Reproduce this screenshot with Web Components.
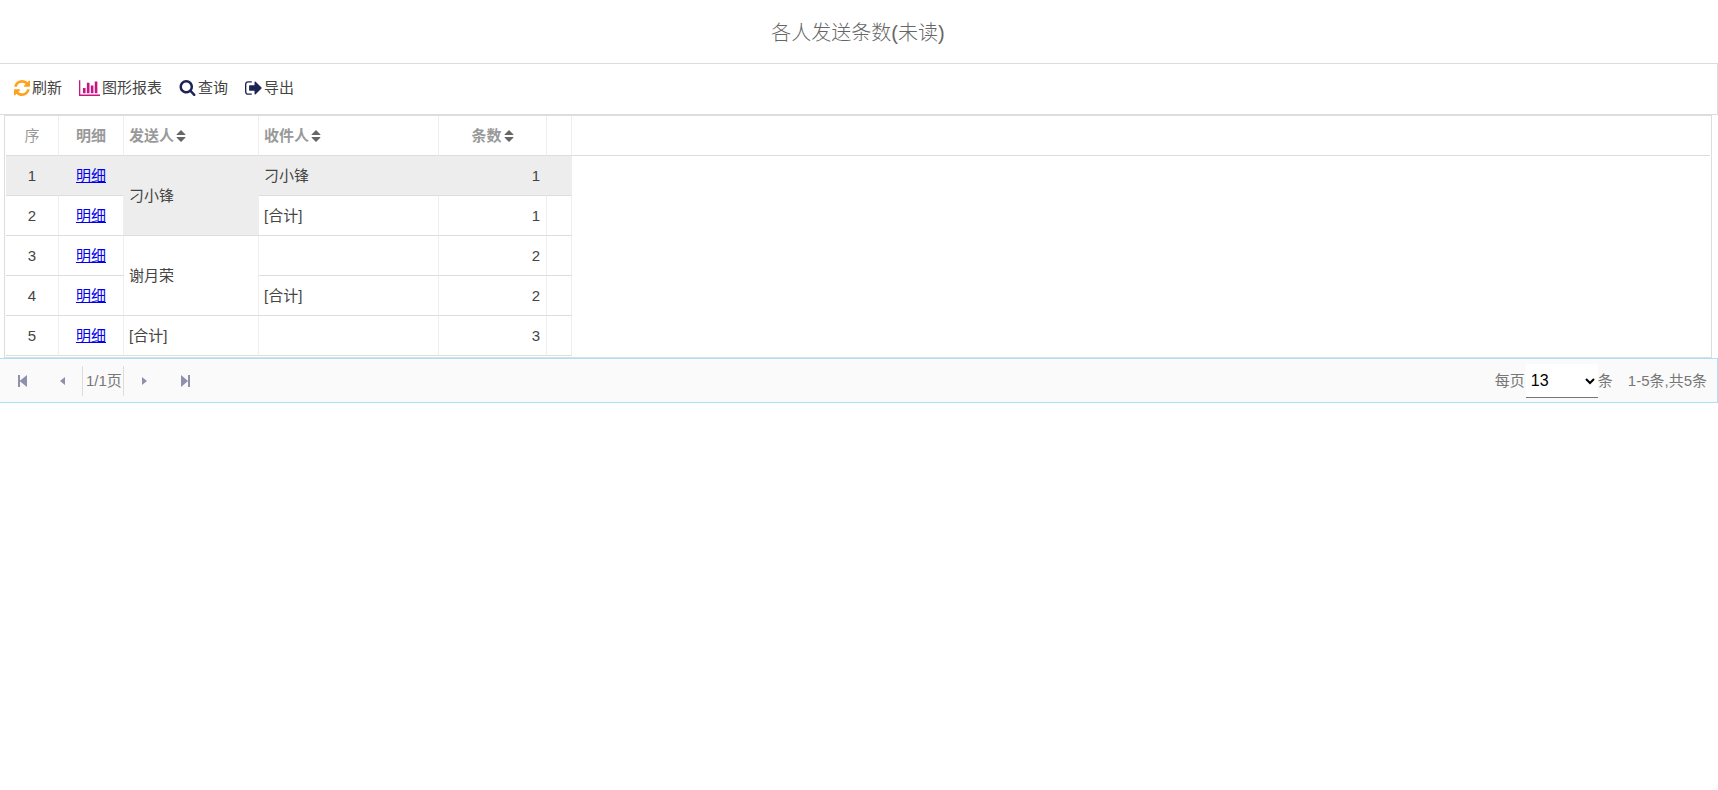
<!DOCTYPE html>
<html lang="zh-CN">
<head>
<meta charset="utf-8">
<meta name="viewport" content="width=device-width, initial-scale=1">
<title>各人发送条数(未读)</title>
<style>
    body {
        margin: 0;
        background: #fff;
        color: #444;
        font: 15px/20px "Liberation Sans", "Noto Sans CJK SC", sans-serif;
        --line: #ddd;
        --line-light: #eee;
        --accent: #ade0f5;
    }
</style>
</head>
<body>
    <report-title>各人发送条数(未读)</report-title>
    <tool-bar>
        <tool-button icon="refresh" color="#ffa11a">刷新</tool-button>
        <tool-button icon="chart" color="#c71585">图形报表</tool-button>
        <tool-button icon="search" color="#1b2452">查询</tool-button>
        <tool-button icon="export" color="#1b2452">导出</tool-button>
    </tool-bar>
    <data-grid></data-grid>
    <page-bar page="1" pages="1" size="13" total="5"></page-bar>

<script>
const ICONS = {
    refresh: {
        box: '0 0 1536 1536', width: 16,
        path: 'M1511 928q0 5-1 7-64 268-268 434.500T764 1536q-146 0-282.500-55T238 1324l-129 129q-19 19-45 19t-45-19-19-45V960q0-26 19-45t45-19h448q26 0 45 19t19 45-19 45l-137 137q71 66 161 102t187 36q134 0 250-65t186-179q11-17 53-117 8-23 30-23h192q13 0 22.500 9.500t9.500 22.500zm25-800v448q0 26-19 45t-45 19h-448q-26 0-45-19t-19-45 19-45l138-138q-148-137-349-137-134 0-250 65T332 500q-11 17-53 117-8 23-30 23H50q-13 0-22.500-9.500T18 608v-7q65-268 270-434.500T768 0q146 0 284 55.500T1297 212l130-129q19-19 45-19t45 19 19 45z'
    },
    chart: {
        box: '0 0 2048 1536', width: 21,
        path: 'M640 768v512H384V768h256zm384-512v1024H768V256h256zm1024 1152v128H0V0h128v1408h1920zm-640-896v768h-256V512h256zm384-384v1152h-256V128h256z'
    },
    search: {
        box: '0 0 1664 1664', width: 17,
        path: 'M1152 704q0-185-131.500-316.500T704 256 387.500 387.500 256 704t131.500 316.500T704 1152t316.500-131.500T1152 704zm512 832q0 52-38 90t-90 38q-54 0-90-38l-343-342q-179 124-399 124-143 0-273.500-55.500t-225-150-150-225T0 704t55.500-273.500 150-225 225-150T704 0t273.500 55.500 225 150 150 225T1408 704q0 220-124 399l343 343q37 37 37 90z'
    },
    export: {
        box: '0 0 1600 1280', width: 17,
        path: 'M640 1184q0 4 1 20t.5 26.500-3 23.500-10 19.500-20.500 6.500H288q-119 0-203.500-84.500T0 992V288Q0 169 84.500 84.500T288 0h320q13 0 22.500 9.500T640 32q0 4 1 20t.5 26.500-3 23.500-10 19.500T608 128H288q-66 0-113 47t-47 113v704q0 66 47 113t113 47h312l11.500 1 11.500 3 8 5.500 7 9 2 13.500zm928-544q0 26-19 45l-544 544q-19 19-45 19t-45-19-19-45V896H448q-26 0-45-19t-19-45V448q0-26 19-45t45-19h448V96q0-26 19-45t45-19 45 19l544 544q19 19 19 45z'
    }
};

class ReportTitle extends HTMLElement {
    connectedCallback() {
        this.attachShadow({ mode: 'open' });
        this.shadowRoot.innerHTML = `
            <style>
                :host { display: block; }
                h1 {
                    margin: 0;
                    padding: 18px 2px 15px 0;
                    color: #666;
                    font-size: 20px;
                    font-weight: 300;
                    line-height: 30px;
                    text-align: center;
                }
            </style>
            <h1><slot></slot></h1>
        `;
    }
}

class ToolBar extends HTMLElement {
    connectedCallback() {
        this.attachShadow({ mode: 'open' });
        this.shadowRoot.innerHTML = `
            <style>
                :host { display: block; }
                div {
                    display: flex;
                    align-items: center;
                    gap: 17px;
                    padding: 9px 14px 11px;
                    border: 1px solid var(--line);
                    border-left: 0;
                }
            </style>
            <div role="toolbar"><slot></slot></div>
        `;
    }
}

class ToolButton extends HTMLElement {
    connectedCallback() {
        const icon = ICONS[this.getAttribute('icon')];
        this.attachShadow({ mode: 'open' });
        this.shadowRoot.innerHTML = `
            <style>
                :host { display: block; }
                button {
                    display: flex;
                    align-items: center;
                    gap: 2px;
                    height: 30px;
                    padding: 0;
                    border: 0;
                    background: none;
                    color: inherit;
                    font: inherit;
                    cursor: pointer;
                }
                svg { height: 16px; }
            </style>
            <button type="button">
                <svg viewBox="${icon.box}" width="${icon.width}" fill="${this.getAttribute('color')}" aria-hidden="true"><path d="${icon.path}"/></svg>
                <span><slot></slot></span>
            </button>
        `;
    }
}

class SortHeader extends HTMLElement {
    connectedCallback() {
        this.attachShadow({ mode: 'open' });
        this.shadowRoot.innerHTML = `
            <style>
                :host { display: inline-block; vertical-align: top; }
                button {
                    display: flex;
                    align-items: center;
                    gap: 2px;
                    padding: 0;
                    border: 0;
                    background: none;
                    color: inherit;
                    font: inherit;
                    cursor: pointer;
                }
            </style>
            <button type="button">
                <slot></slot>
                <svg width="10" height="14" viewBox="0 0 10 14" fill="#666" aria-hidden="true"><path d="M5 1 9.500 5.500Q9.500 6 9 6H1Q.5 6 .5 5.500zM1 8h8q.5 0 .5.500L5 13 .5 8.500Q.5 8 1 8z"/></svg>
            </button>
        `;
    }
}

class DataGrid extends HTMLElement {
    // span = rows the sender cell covers, 0 = covered by the row above
    rows = [
        { sender: '刁小锋', span: 2, receiver: '刁小锋', count: 1, active: true },
        { span: 0, receiver: '[合计]', count: 1 },
        { sender: '谢月荣', span: 2, receiver: '', count: 2 },
        { span: 0, receiver: '[合计]', count: 2 },
        { sender: '[合计]', span: 1, receiver: '', count: 3 }
    ];

    connectedCallback() {
        this.attachShadow({ mode: 'open' });
        this.shadowRoot.innerHTML = `
            <style>
                :host {
                    display: block;
                    margin: 0 6px 0 4px;
                    padding: 0 1px 1px;
                    border: 1px solid var(--line);
                }
                table {
                    width: 100%;
                    table-layout: fixed;
                    border-spacing: 0;
                }
                th, td {
                    box-sizing: border-box;
                    height: 40px;
                    padding: 0 5px;
                    border-right: 1px solid var(--line-light);
                    border-bottom: 1px solid var(--line);
                    text-align: left;
                }
                th { color: #999; }
                th.plain { font-weight: normal; }
                th.rest { border-right: 0; }
                .mid { text-align: center; }
                td.num { padding-right: 6px; text-align: right; }
                tr.active td { background: #ededed; }
                a { color: #00e; }
            </style>
            <table>
                <colgroup>
                    <col style="width: 53px">
                    <col style="width: 65px">
                    <col style="width: 135px">
                    <col style="width: 180px">
                    <col style="width: 108px">
                    <col style="width: 25px">
                    <col>
                </colgroup>
                <thead>
                    <tr>
                        <th class="mid plain">序</th>
                        <th class="mid">明细</th>
                        <th><sort-header>发送人</sort-header></th>
                        <th><sort-header>收件人</sort-header></th>
                        <th class="mid"><sort-header>条数</sort-header></th>
                        <th></th>
                        <th class="rest"></th>
                    </tr>
                </thead>
                <tbody>${this.rows.map((row, i) => this.renderRow(row, i)).join('')}</tbody>
            </table>
        `;
    }

    renderRow(row, i) {
        const sender = row.span ? `<td rowspan="${row.span}">${row.sender}</td>` : '';
        return `
            <tr class="${row.active ? 'active' : ''}">
                <td class="mid">${i + 1}</td>
                <td class="mid"><a href="#detail-${i + 1}">明细</a></td>
                ${sender}
                <td>${row.receiver}</td>
                <td class="num">${row.count}</td>
                <td></td>
            </tr>
        `;
    }
}

class PageBar extends HTMLElement {
    connectedCallback() {
        const page = this.getAttribute('page');
        const pages = this.getAttribute('pages');
        const size = this.getAttribute('size');
        const total = this.getAttribute('total');
        this.attachShadow({ mode: 'open' });
        this.shadowRoot.innerHTML = `
            <style>
                :host {
                    display: flex;
                    align-items: center;
                    justify-content: space-between;
                    padding: 5px 10px 4px 2px;
                    border: 1px solid var(--accent);
                    border-left: 0;
                    background: #fafafa;
                    color: #777;
                }
                nav, .size { display: flex; align-items: center; }
                button {
                    display: flex;
                    align-items: center;
                    justify-content: center;
                    width: 40px;
                    height: 30px;
                    padding: 0;
                    border: 0;
                    background: none;
                    cursor: pointer;
                }
                .page {
                    padding: 5px 1px 5px 3px;
                    border: solid var(--line);
                    border-width: 0 1px;
                }
                select {
                    width: 72px;
                    height: 34px;
                    margin-left: 1px;
                    padding: 0 3px 0 1px;
                    border: 0;
                    border-bottom: 1px solid #767676;
                    border-radius: 0;
                    background: #fff;
                    color: #000;
                    font: 16px "Liberation Sans", sans-serif;
                }
                .total { margin-left: 15px; }
            </style>
            <nav>
                ${this.button('首页', 'M2 1h1v12H2zM3.500 7 11 1v12zM3 1h1v12H3z')}
                ${this.button('上一页', 'M9 3v8L4 7z')}
                <span class="page">${page}/${pages}页</span>
                ${this.button('下一页', 'M4 3v8l5-4z')}
                ${this.button('末页', 'M10 1h2v12h-2zM3 1v12l7-6z')}
            </nav>
            <div class="size">
                <label for="size">每页</label>
                <select id="size">
                    <option>${size}</option>
                    <option>20</option>
                    <option>50</option>
                </select>
                <span>条</span>
                <span class="total">1-${total}条,共${total}条</span>
            </div>
        `;
    }

    button(label, path) {
        return `
            <button type="button" aria-label="${label}">
                <svg width="12" height="14" viewBox="0 0 12 14" fill="#8d91ad" aria-hidden="true"><path d="${path}"/></svg>
            </button>
        `;
    }
}

customElements.define('report-title', ReportTitle);
customElements.define('tool-bar', ToolBar);
customElements.define('tool-button', ToolButton);
customElements.define('sort-header', SortHeader);
customElements.define('data-grid', DataGrid);
customElements.define('page-bar', PageBar);
</script>
</body>
</html>
